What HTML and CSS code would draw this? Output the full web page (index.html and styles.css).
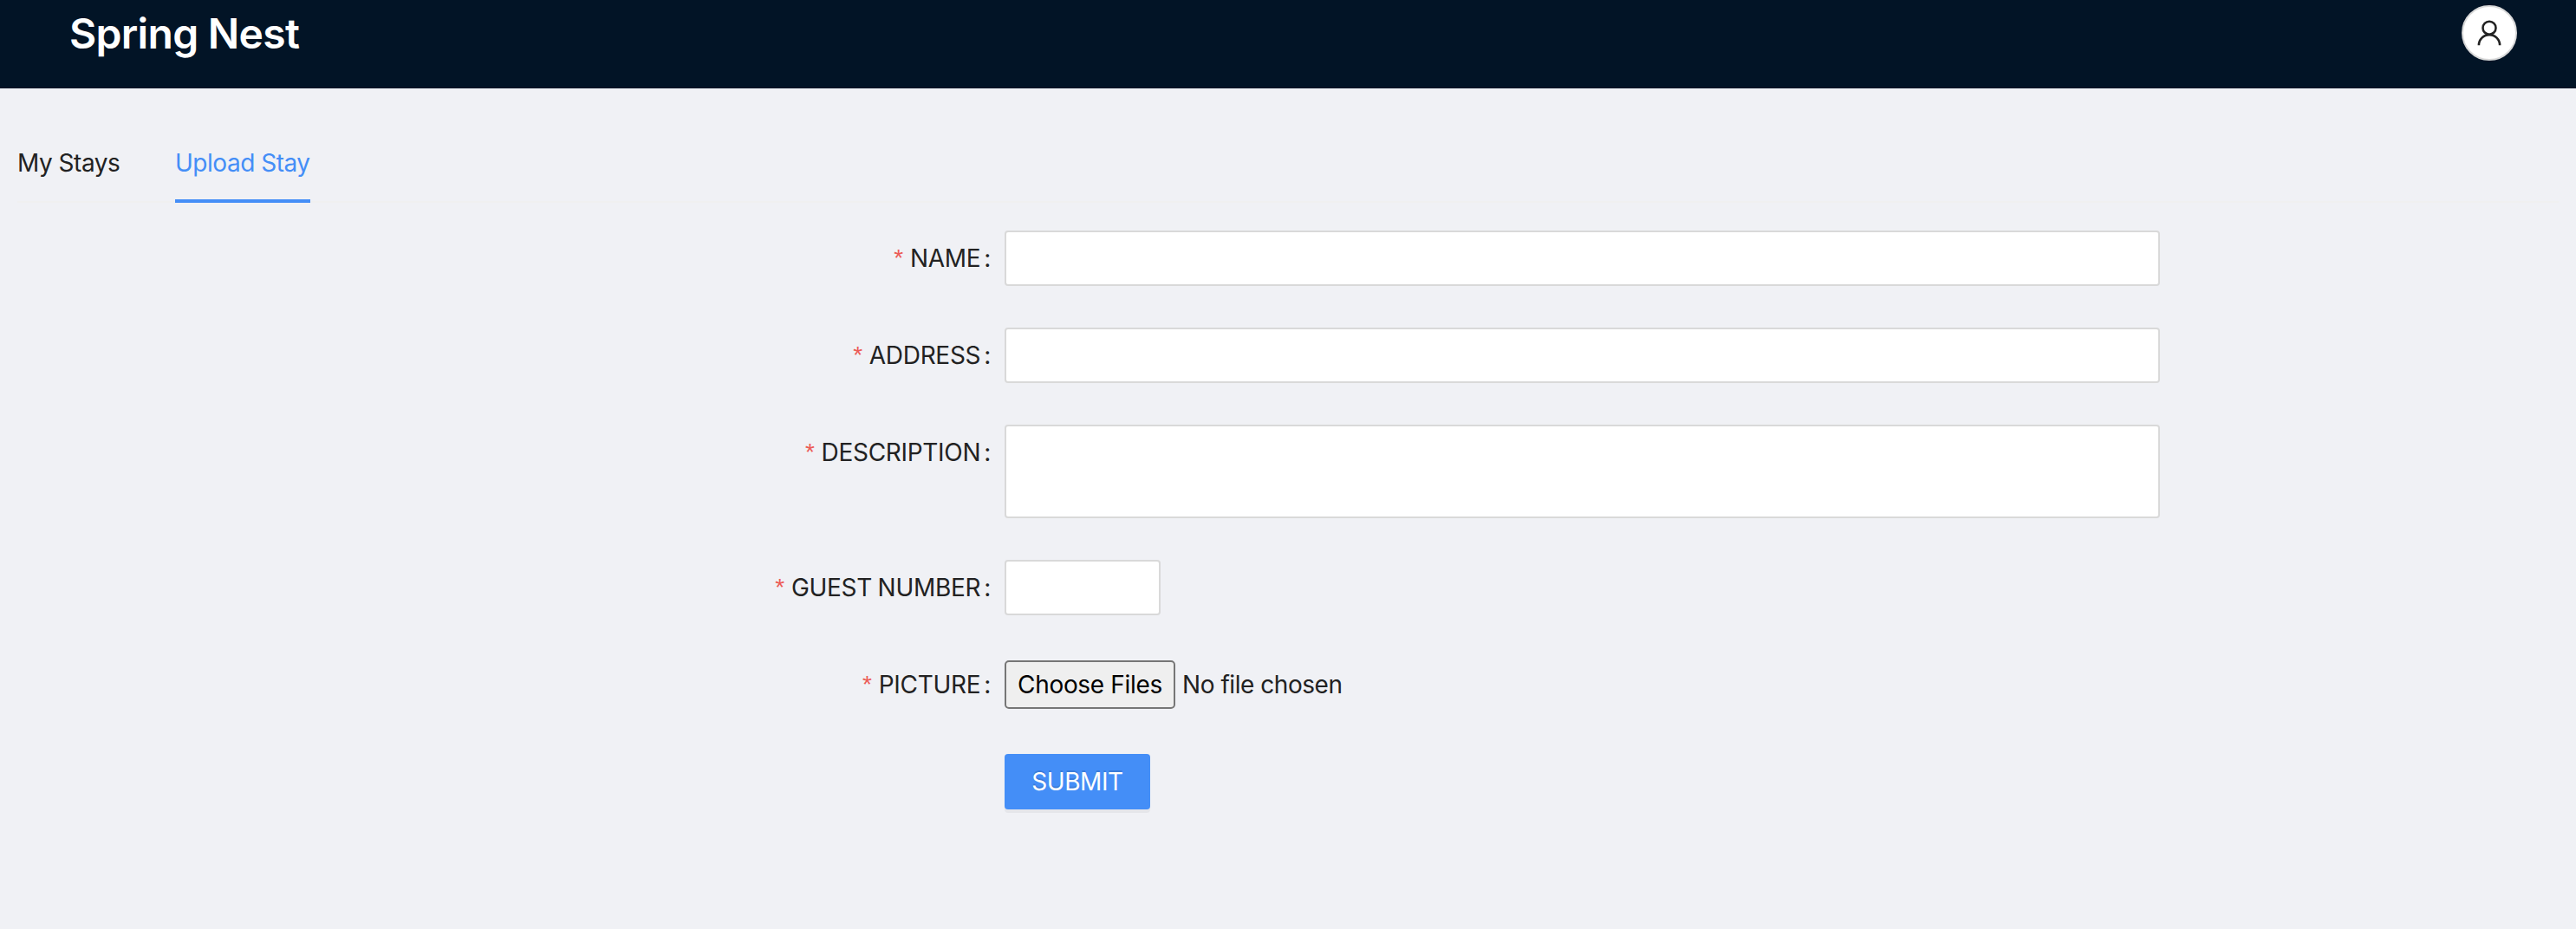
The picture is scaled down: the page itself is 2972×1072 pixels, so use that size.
FILE: index.html
```html
<!DOCTYPE html>
<html lang="en">
<head>
<meta charset="utf-8">
<title>Spring Nest</title>
<link rel="stylesheet" href="styles.css">
</head>
<body>
<header class="header">
  <div class="brand">Spring Nest</div>
  <button class="avatar" aria-label="Account">
    <svg viewBox="0 0 28 30" width="28" height="30"><circle cx="14" cy="9.2" r="7.5"/><path d="M1.9 29.3v-.1a12.1 12.1 0 0 1 24.2 0v.1"/></svg>
  </button>
</header>
<main class="content">
  <nav class="tabs">
    <a class="tab">My Stays</a>
    <a class="tab tab-active">Upload Stay</a>
  </nav>
  <form class="form">
    <div class="row"><label class="label" for="name">NAME</label><input class="field" id="name" type="text"></div>
    <div class="row"><label class="label" for="address">ADDRESS</label><input class="field" id="address" type="text"></div>
    <div class="row"><label class="label" for="description">DESCRIPTION</label><textarea class="field field-area" id="description"></textarea></div>
    <div class="row"><label class="label label-words" for="guests">GUEST NUMBER</label><input class="field field-number" id="guests" type="text"></div>
    <div class="row"><label class="label" for="picture">PICTURE</label>
      <div class="picker"><button class="choose" id="picture" type="button">Choose Files</button><span class="chosen">No file chosen</span></div>
    </div>
    <div class="row"><button class="submit" type="button">SUBMIT</button></div>
  </form>
</main>
</body>
</html>
```
FILE: styles.css
```css
* { box-sizing: border-box; }
body { margin: 0; min-height: 1072px; background: #f0f1f5; color: #222; font: 28px/44px Inter, "Liberation Sans", sans-serif; }
.header { display: flex; justify-content: space-between; height: 102px; padding: 6px 68px 0 80px; background: #021426; }
.brand { color: #fff; font-size: 48px; font-weight: 600; line-height: 65px; letter-spacing: -0.7px; }
.avatar { display: flex; align-items: center; justify-content: center; width: 64px; height: 64px; padding: 0; border: 2px solid #d9d9d9; border-radius: 50%; background: #fff; }
.avatar svg { fill: none; stroke: #222; stroke-width: 2.6; }
.content { padding: 62px 20px 0; }
.tabs { display: flex; gap: 64px; height: 70px; margin-bottom: 32px; box-shadow: inset 0 -2px #f0f0f0; }
.tab { width: 118px; padding-top: 2px; letter-spacing: -0.48px; white-space: nowrap; }
.tab-active { width: 156px; color: #448ef7; border-bottom: 4px solid #448ef7; }
.form { display: flex; flex-direction: column; gap: 48px; }
.row { display: grid; grid-template-columns: 1139px 1333px; align-items: start; }
.row > :last-child { grid-column: 2; }
.label { display: flex; justify-content: flex-end; height: 64px; line-height: 64px; letter-spacing: -0.3px; }
.label-words { word-spacing: -1px; }
.label::before { content: "*"; margin-right: 8px; color: #ec5b56; font-family: "Liberation Sans", sans-serif; }
.label::after { content: ":"; margin: 0 16px 0 4px; }
.field { width: 100%; height: 64px; margin: 0; border: 2px solid #d9d9d9; border-radius: 4px; background: #fff; font: inherit; resize: none; }
.field-area { display: block; height: 108px; }
.field-number { width: 180px; }
.picker { display: flex; align-items: center; height: 64px; }
.choose { width: 197px; height: 56px; margin-right: 8px; padding: 0; border: 2px solid #767676; border-radius: 5px; background: #efefef; color: #000; font: inherit; letter-spacing: -0.33px; }
.chosen { letter-spacing: -0.45px; }
.submit { width: 168px; height: 64px; border: 0; border-radius: 4px; background: #448ef7; color: #fff; font: inherit; letter-spacing: -0.45px; box-shadow: 0 4px #0000000b; text-shadow: 0 -2px #0000001f; }
```
